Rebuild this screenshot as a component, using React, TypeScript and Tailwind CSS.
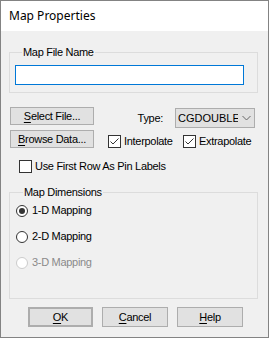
import type { ReactNode } from "react";

const FONT = "font-['Liberation_Sans',Arial,sans-serif] text-[11px] tracking-[-0.3px] text-black";

function Mnemonic({ ch, rest }: { ch: string; rest: string }) {
  return (
    <span>
      <span className="underline underline-offset-[2px]">{ch}</span>
      {rest}
    </span>
  );
}

function Button({ children, className = "" }: { children: ReactNode; className?: string }) {
  return (
    <button
      type="button"
      className={`flex items-center justify-center border border-[#adadad] bg-[#e1e1e1] leading-none ${className}`}
    >
      {children}
    </button>
  );
}

function CheckBox({ label, checked }: { label: string; checked?: boolean }) {
  return (
    <label className="flex items-center gap-[3px]">
      <span className="flex h-[13px] w-[13px] items-center justify-center border border-[#333] bg-white">
        {checked ? (
          <svg width="11" height="11" viewBox="0 0 11 11">
            <path d="M1.5 5.5 L4 8 L9.5 2.5" fill="none" stroke="#333" strokeWidth="1" />
          </svg>
        ) : null}
      </span>
      <span className="leading-[13px]">{label}</span>
    </label>
  );
}

function Radio({ label, checked, disabled }: { label: string; checked?: boolean; disabled?: boolean }) {
  return (
    <label className="flex items-center gap-[4px]">
      <span
        className={`flex h-[12px] w-[12px] items-center justify-center rounded-full border bg-white ${
          disabled ? "border-[#cccccc]" : "border-[#333]"
        }`}
      >
        {checked ? <span className="h-[6px] w-[6px] rounded-full bg-[#333]" /> : null}
      </span>
      <span className={`leading-[13px] ${disabled ? "text-[#8a8a8a]" : ""}`}>{label}</span>
    </label>
  );
}

export default function App() {
  return (
    <div className={`flex h-[338px] w-[269px] flex-col border border-[#838383] ${FONT}`}>
      <div className="flex h-[30px] items-center bg-white pl-[8px] font-['Noto_Sans',sans-serif] text-[12px] tracking-normal">
        Map Properties
      </div>
      <div className="flex flex-1 flex-col bg-[#f0f0f0]">
        <fieldset className="ml-[8px] mt-[15px] w-[249px] border border-[#dcdcdc] px-[5px] pb-[7px]">
          <legend className="ml-[7px] px-[1px] leading-[12px]">Map File Name</legend>
          <input
            type="text"
            className="mt-[7px] block h-[20px] w-[229px] border border-[#0078d7] bg-white outline-none"
          />
        </fieldset>

        <div className="mt-[14px] flex">
          <div className="ml-[9px] flex flex-col gap-[5px]">
            <Button className="h-[18px] w-[84px]">
              <Mnemonic ch="S" rest="elect File..." />
            </Button>
            <Button className="h-[18px] w-[84px]">
              <Mnemonic ch="B" rest="rowse Data..." />
            </Button>
          </div>
          <div className="ml-[14px] flex w-[147px] flex-col">
            <div className="mt-[1px] flex h-[20px] items-center justify-end gap-[12px]">
              <span>Type:</span>
              <div className="flex h-[20px] w-[80px] items-center overflow-hidden border border-[#adadad] bg-[#e1e1e1] pl-[2px]">
                <span className="w-[60px] shrink-0 overflow-hidden whitespace-nowrap tracking-normal">CGDOUBLE</span>
                <svg width="9" height="6" viewBox="0 0 9 6" className="ml-[4px] shrink-0">
                  <path d="M0.5 1 L4.5 5 L8.5 1" fill="none" stroke="#666" strokeWidth="1" />
                </svg>
              </div>
            </div>
            <div className="mt-[7px] flex">
              <div className="w-[75px]">
                <CheckBox label="Interpolate" checked />
              </div>
              <CheckBox label="Extrapolate" checked />
            </div>
          </div>
        </div>

        <div className="ml-[18px] mt-[12px]">
          <CheckBox label="Use First Row As Pin Labels" />
        </div>

        <fieldset className="ml-[8px] mt-[13px] h-[113px] w-[249px] border border-[#dcdcdc] px-[6px]">
          <legend className="ml-[7px] px-[1px] leading-[12px]">Map Dimensions</legend>
          <div className="mt-[6px] flex flex-col gap-[13px]">
            <Radio label="1-D Mapping" checked />
            <Radio label="2-D Mapping" />
            <Radio label="3-D Mapping" disabled />
          </div>
        </fieldset>

        <div className="ml-[27px] mt-[8px] flex gap-[8px]">
          <Button className="h-[20px] w-[65px] border-2 border-[#0078d7]">
            <Mnemonic ch="O" rest="K" />
          </Button>
          <Button className="ml-[1px] h-[20px] w-[66px]">
            <Mnemonic ch="C" rest="ancel" />
          </Button>
          <Button className="ml-[1px] h-[20px] w-[66px]">
            <Mnemonic ch="H" rest="elp" />
          </Button>
        </div>
      </div>
    </div>
  );
}
